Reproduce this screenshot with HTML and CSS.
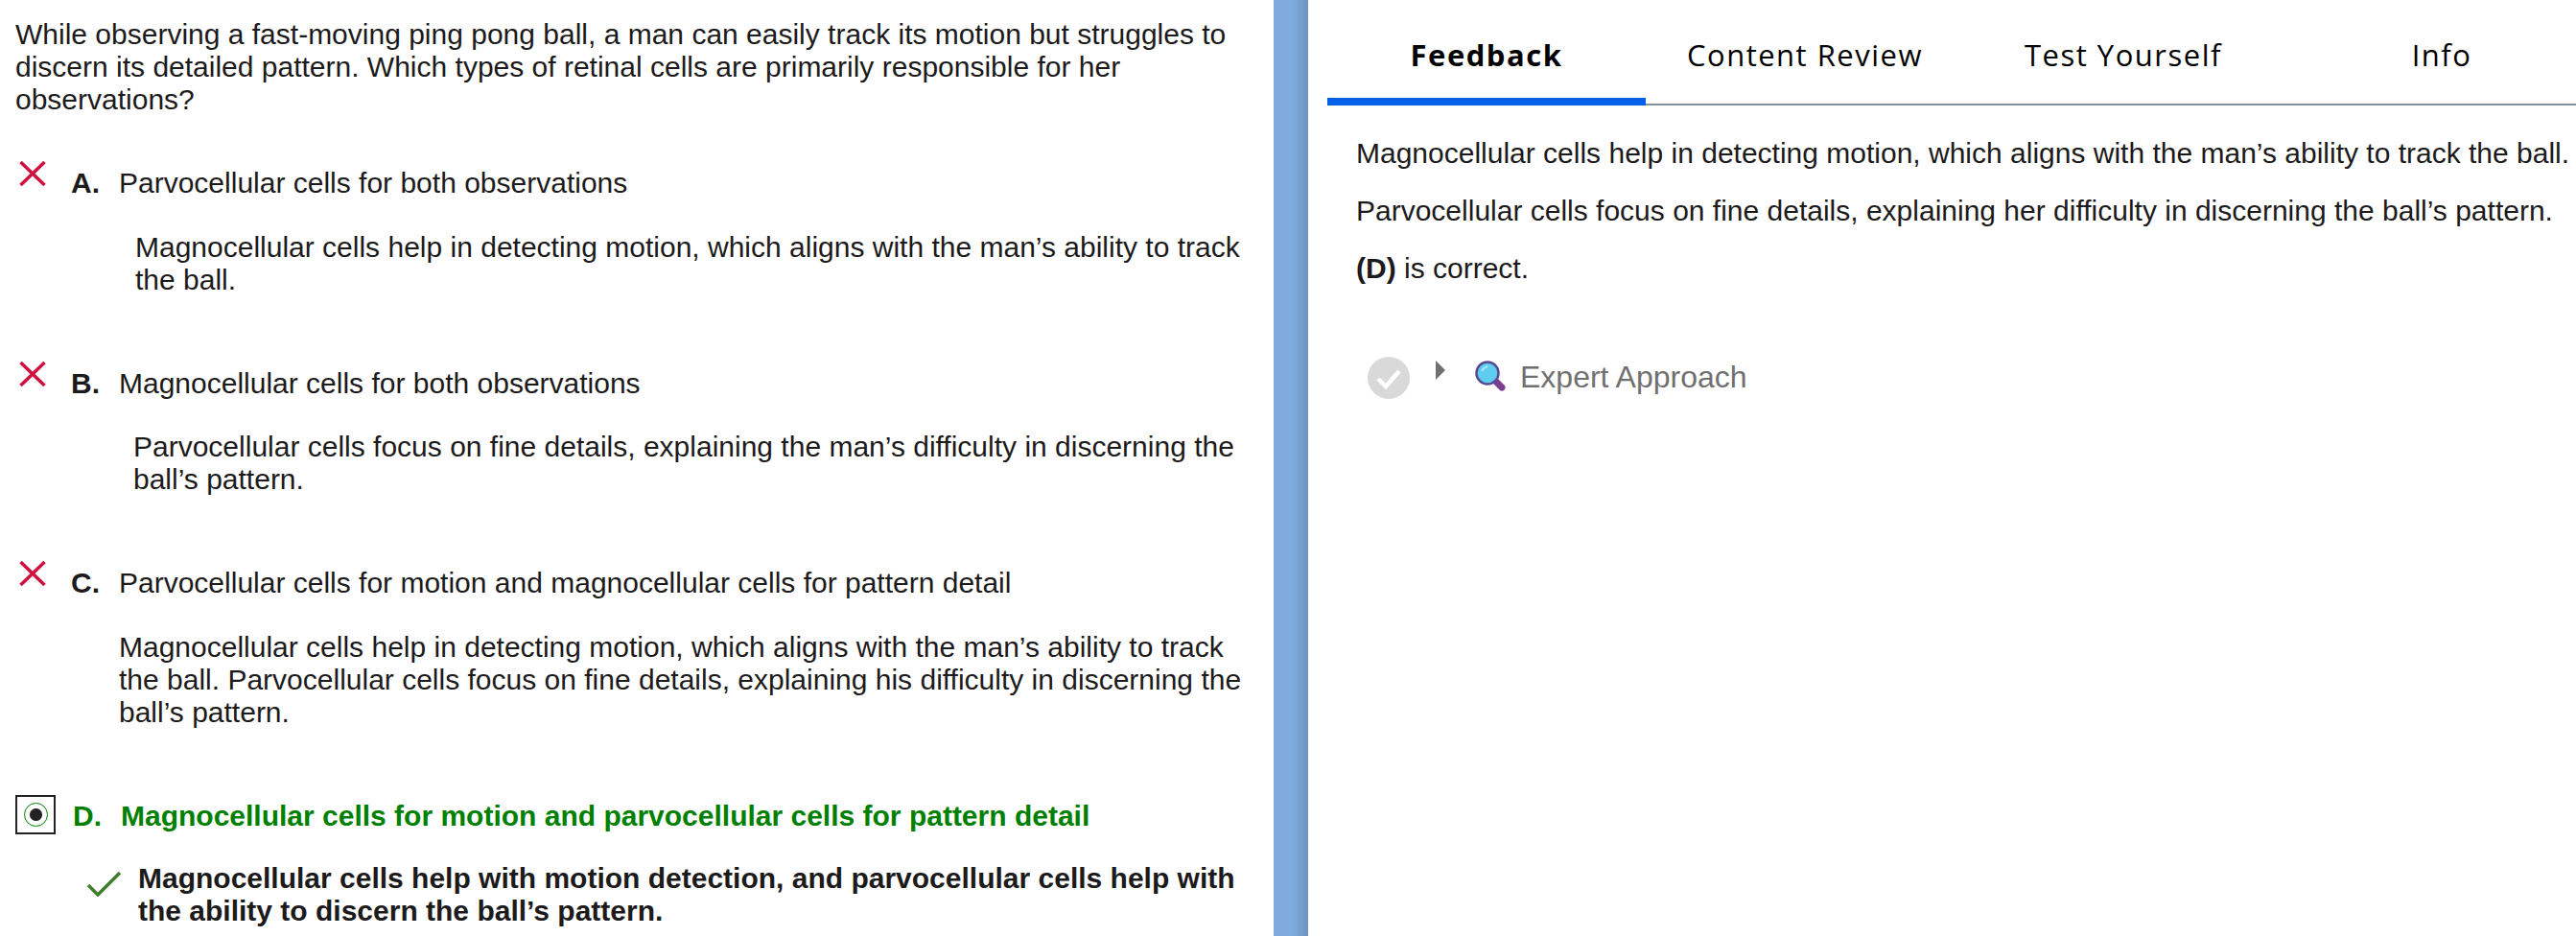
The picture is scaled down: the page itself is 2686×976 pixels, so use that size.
FILE: index.html
```html
<!DOCTYPE html>
<html lang="en">
<head>
    <meta charset="UTF-8">
    <title>Question Review</title>
    <link rel="stylesheet" href="styles.css">
</head>
<body>
    <div class="page">
        <div class="question-pane">
            <p class="stem">While observing a fast-moving ping pong ball, a man can easily track its motion but struggles to discern its detailed pattern. Which types of retinal cells are primarily responsible for her observations?</p>

            <div class="option option-first">
                <div class="option-row">
                    <svg class="mark" viewBox="0 0 28 26"><path d="M1.5 1 L26.5 25 M26.5 1 L1.5 25" fill="none" stroke="#d2103f" stroke-width="3.5"/></svg>
                    <span class="letter">A.</span>
                    <span>Parvocellular cells for both observations</span>
                </div>
                <p class="explain explain-a">Magnocellular cells help in detecting motion, which aligns with the man’s ability to track the ball.</p>
            </div>

            <div class="option">
                <div class="option-row">
                    <svg class="mark" viewBox="0 0 28 26"><path d="M1.5 1 L26.5 25 M26.5 1 L1.5 25" fill="none" stroke="#d2103f" stroke-width="3.5"/></svg>
                    <span class="letter">B.</span>
                    <span>Magnocellular cells for both observations</span>
                </div>
                <p class="explain explain-b">Parvocellular cells focus on fine details, explaining the man’s difficulty in discerning the ball’s pattern.</p>
            </div>

            <div class="option">
                <div class="option-row">
                    <svg class="mark" viewBox="0 0 28 26"><path d="M1.5 1 L26.5 25 M26.5 1 L1.5 25" fill="none" stroke="#d2103f" stroke-width="3.5"/></svg>
                    <span class="letter">C.</span>
                    <span>Parvocellular cells for motion and magnocellular cells for pattern detail</span>
                </div>
                <p class="explain explain-c">Magnocellular cells help in detecting motion, which aligns with the man’s ability to track the ball. Parvocellular cells focus on fine details, explaining his difficulty in discerning the ball’s pattern.</p>
            </div>

            <div class="option">
                <div class="option-row correct">
                    <span class="radio-box"><span class="radio-dot"></span></span>
                    <span class="letter">D.</span>
                    <span>Magnocellular cells for motion and parvocellular cells for pattern detail</span>
                </div>
                <div class="answer-note">
                    <svg class="tick" viewBox="0 0 35 26"><path d="M1 14 L11 24 L34 1" fill="none" stroke="#3f7f2a" stroke-width="3.5"/></svg>
                    <p>Magnocellular cells help with motion detection, and parvocellular cells help with the ability to discern the ball’s pattern.</p>
                </div>
            </div>
        </div>

        <div class="divider"></div>

        <div class="feedback-pane">
            <div class="tabs">
                <div class="tab active">Feedback</div>
                <div class="tab">Content Review</div>
                <div class="tab">Test Yourself</div>
                <div class="tab">Info</div>
            </div>
            <div class="feedback-body">
                <p>Magnocellular cells help in detecting motion, which aligns with the man’s ability to track the ball.</p>
                <p>Parvocellular cells focus on fine details, explaining her difficulty in discerning the ball’s pattern.</p>
                <p><b>(D)</b> is correct.</p>
                <div class="expert">
                    <svg class="expert-check" viewBox="0 0 44 44">
                        <circle cx="22" cy="22" r="22" fill="#d9d9d9"/>
                        <path d="M11 23 L19 31 L33 15" fill="none" stroke="#fff" stroke-width="4.5"/>
                    </svg>
                    <span class="caret"></span>
                    <svg class="lens" viewBox="0 0 32 32">
                        <path d="M20 20 L28 28" stroke="#7c3f8e" stroke-width="7" stroke-linecap="round"/>
                        <circle cx="13" cy="13" r="11.5" fill="#5ecdee" stroke="#5a4a94" stroke-width="2.5"/>
                        <path d="M7 11 Q9 7 13 6" fill="none" stroke="#a8e6f7" stroke-width="2"/>
                    </svg>
                    <span class="expert-label">Expert Approach</span>
                </div>
            </div>
        </div>
    </div>
</body>
</html>
```

FILE: styles.css
```css
* {
    margin: 0;
    padding: 0;
    box-sizing: border-box;
}

html, body {
    height: 100%;
    overflow: hidden;
}

body {
    background: #fff;
    color: #1c1a1b;
    font-family: "Liberation Sans", Arial, sans-serif;
    font-size: 30px;
    line-height: 34px;
}

.page {
    display: flex;
    height: 976px;
}

/* left side */
.question-pane {
    flex: none;
    width: 1328px;
    padding: 19px 30px 0 16px;
}

.option {
    margin-top: 74px;
}

.option-first {
    margin-top: 53px;
}

.option-row {
    display: flex;
    align-items: flex-start;
}

.mark {
    flex: none;
    width: 28px;
    height: 26px;
    margin: -6px 26px 0 4px;
}

.letter {
    flex: none;
    width: 50px;
    font-weight: 700;
}

.explain-a {
    margin-top: 33px;
    padding-left: 125px;
}

.explain-b {
    margin-top: 32px;
    padding-left: 123px;
}

.explain-c {
    margin-top: 33px;
    padding-left: 108px;
}

.correct {
    color: #008000;
    font-weight: 700;
}

.radio-box {
    flex: none;
    display: flex;
    align-items: center;
    justify-content: center;
    width: 42px;
    height: 41px;
    margin: -5px 18px 0 0;
    border: 2px solid #222;
}

.radio-dot {
    width: 25px;
    height: 25px;
    border: 1.5px solid #008000;
    border-radius: 50%;
    background: radial-gradient(circle, #222 0, #222 6px, #fff 7px);
}

.answer-note {
    display: flex;
    align-items: flex-start;
    margin-top: 29px;
    padding-left: 75px;
    font-weight: 700;
}

.tick {
    flex: none;
    width: 35px;
    height: 26px;
    margin: 10px 18px 0 0;
}

/* divider between panes */
.divider {
    flex: none;
    width: 36px;
    background: linear-gradient(90deg, #7fabdf 0%, #7fabdf 55%, #6c91bf 100%);
}

/* right side */
.feedback-pane {
    flex: 1;
    min-width: 0;
    padding-left: 20px;
}

.tabs {
    display: flex;
    width: 1328px;
    height: 110px;
    border-bottom: 2px solid #85929a;
}

.tab {
    flex: none;
    width: 332px;
    height: 110px;
    padding-top: 37px;
    font-family: "Open Sans", sans-serif;
    font-size: 31px;
    line-height: 40px;
    letter-spacing: 1.5px;
    text-align: center;
    color: #000;
}

.tab.active {
    font-weight: 700;
    border-bottom: 8px solid #0060e8;
}

.feedback-body {
    padding: 33px 0 0 30px;
}

.feedback-body p {
    margin-bottom: 26px;
}

.expert {
    display: flex;
    align-items: flex-start;
    margin: 75px 0 0 12px;
    color: #707070;
    font-size: 32px;
}

.expert-check {
    flex: none;
    width: 44px;
    height: 44px;
    margin-right: 27px;
}

.caret {
    flex: none;
    width: 0;
    height: 0;
    margin: 4px 31px 0 0;
    border-top: 10px solid transparent;
    border-bottom: 10px solid transparent;
    border-left: 10px solid #707070;
}

.lens {
    flex: none;
    width: 32px;
    height: 32px;
    margin: 4px 15px 0 0;
}

.expert-label {
    line-height: 43px;
}
```
